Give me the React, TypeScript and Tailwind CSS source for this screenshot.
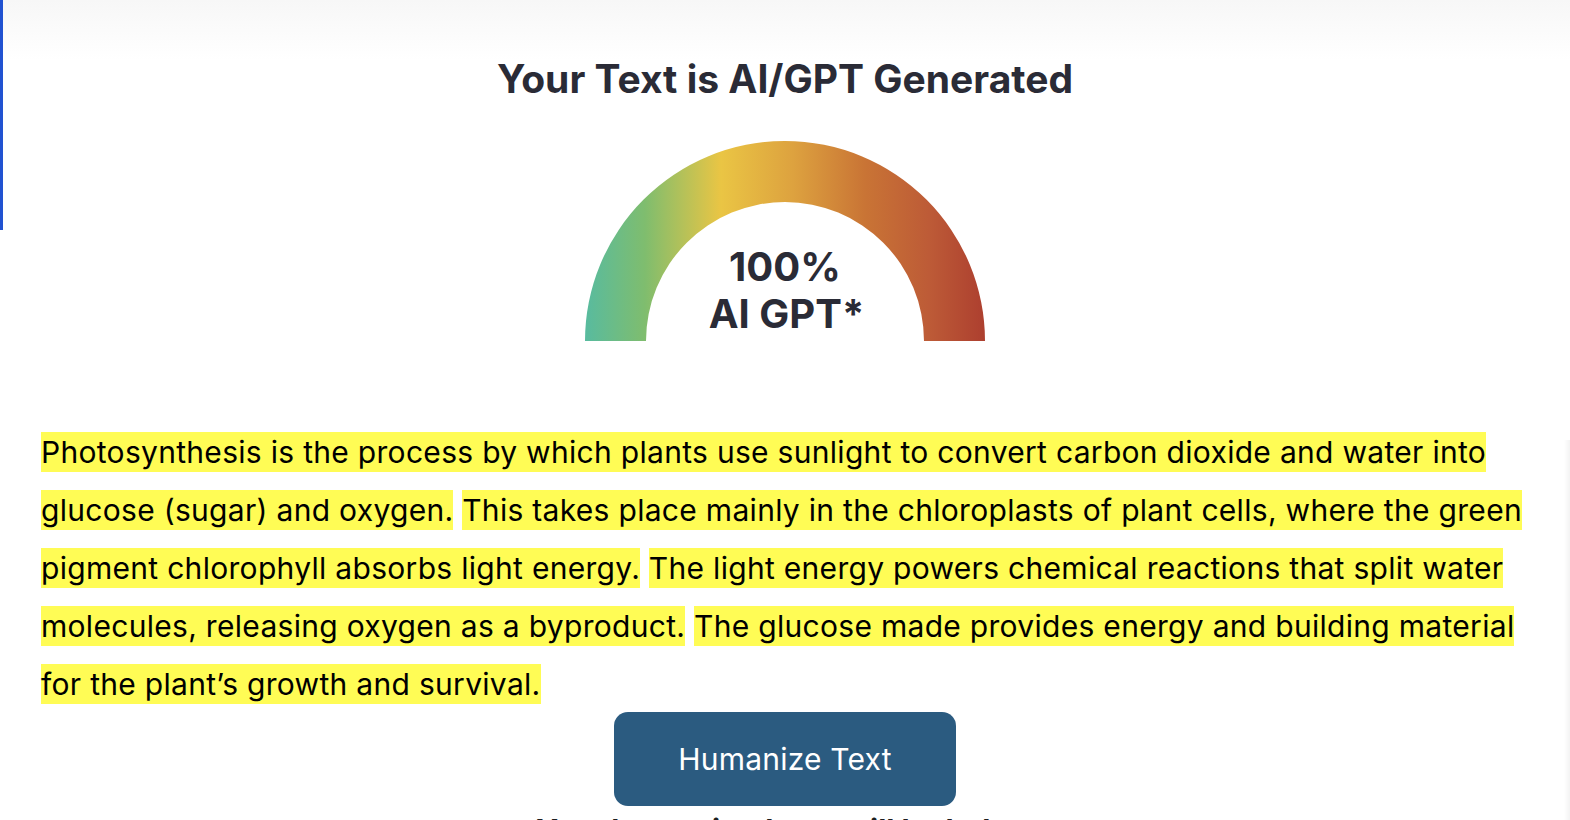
import React from "react";

// sentences, each one is highlighted on its own
const sentences = [
  "Photosynthesis is the process by which plants use sunlight to convert carbon dioxide and water into glucose (sugar) and oxygen.",
  "This takes place mainly in the chloroplasts of plant cells, where the green pigment chlorophyll absorbs light energy.",
  "The light energy powers chemical reactions that split water molecules, releasing oxygen as a byproduct.",
  "The glucose made provides energy and building material for the plant\u2019s growth and survival.",
];

function Gauge() {
  return (
    <div className="relative w-[400px] h-[200px]">
      <svg width="400" height="200" viewBox="0 0 400 200" className="block">
        <defs>
          <linearGradient id="meter" x1="0" y1="0" x2="1" y2="0">
            <stop offset="0" stopColor="#58bb9f" />
            <stop offset="0.15" stopColor="#7fbd6e" />
            <stop offset="0.34" stopColor="#eac544" />
            <stop offset="0.52" stopColor="#dda23f" />
            <stop offset="0.7" stopColor="#c97435" />
            <stop offset="0.86" stopColor="#bd5b37" />
            <stop offset="1" stopColor="#ad3f2f" />
          </linearGradient>
        </defs>
        <path
          d="M0 200 A200 200 0 0 1 400 200 L339 200 A139 139 0 0 0 61 200 Z"
          fill="url(#meter)"
        />
      </svg>
      <div className="absolute left-0 right-0 top-[102px] flex flex-col items-center text-[40px] leading-[47px] font-bold text-[#2a2b36]">
        <span>100%</span>
        <span className="pl-[3px]">AI GPT*</span>
      </div>
    </div>
  );
}

export default function App() {
  return (
    <div className="relative w-full h-[820px] overflow-hidden bg-white font-['Inter',sans-serif]">
      {/* faint header shade */}
      <div className="absolute top-0 left-0 right-0 h-[60px] bg-gradient-to-b from-[#f7f7f7] to-white"></div>
      <div className="absolute top-0 left-0 w-[3px] h-[230px] bg-[#2152d1]"></div>
      <div className="absolute top-[440px] right-0 w-[6px] bottom-0 bg-gradient-to-r from-white to-[#f3f3f3]"></div>

      <div className="relative flex flex-col items-center pt-[55px]">
        <h1 className="text-[39px] leading-[48px] font-bold text-[#2a2b36] tracking-[0px]">
          Your Text is AI/GPT Generated
        </h1>

        <div className="mt-[38px]">
          <Gauge />
        </div>

        <p className="self-stretch mt-[82px] pl-[41px] pr-[36px] text-[30px] leading-[58px] tracking-[0.3px] text-black">
          {sentences.map((s, i) => (
            <React.Fragment key={i}>
              <span className="bg-[#fffc55] py-[2px]">{s}</span>
              {i < sentences.length - 1 ? " " : ""}
            </React.Fragment>
          ))}
        </p>

        <button className="-mt-[1px] w-[342px] h-[94px] rounded-[14px] bg-[#2b5b80] text-white text-[30px] tracking-[0.2px]">
          Humanize Text
        </button>

        <p className="mt-[6px] text-[30px] leading-[36px] font-bold text-[#1d1d1f]">
          Your humanized text will be below
        </p>
      </div>
    </div>
  );
}
